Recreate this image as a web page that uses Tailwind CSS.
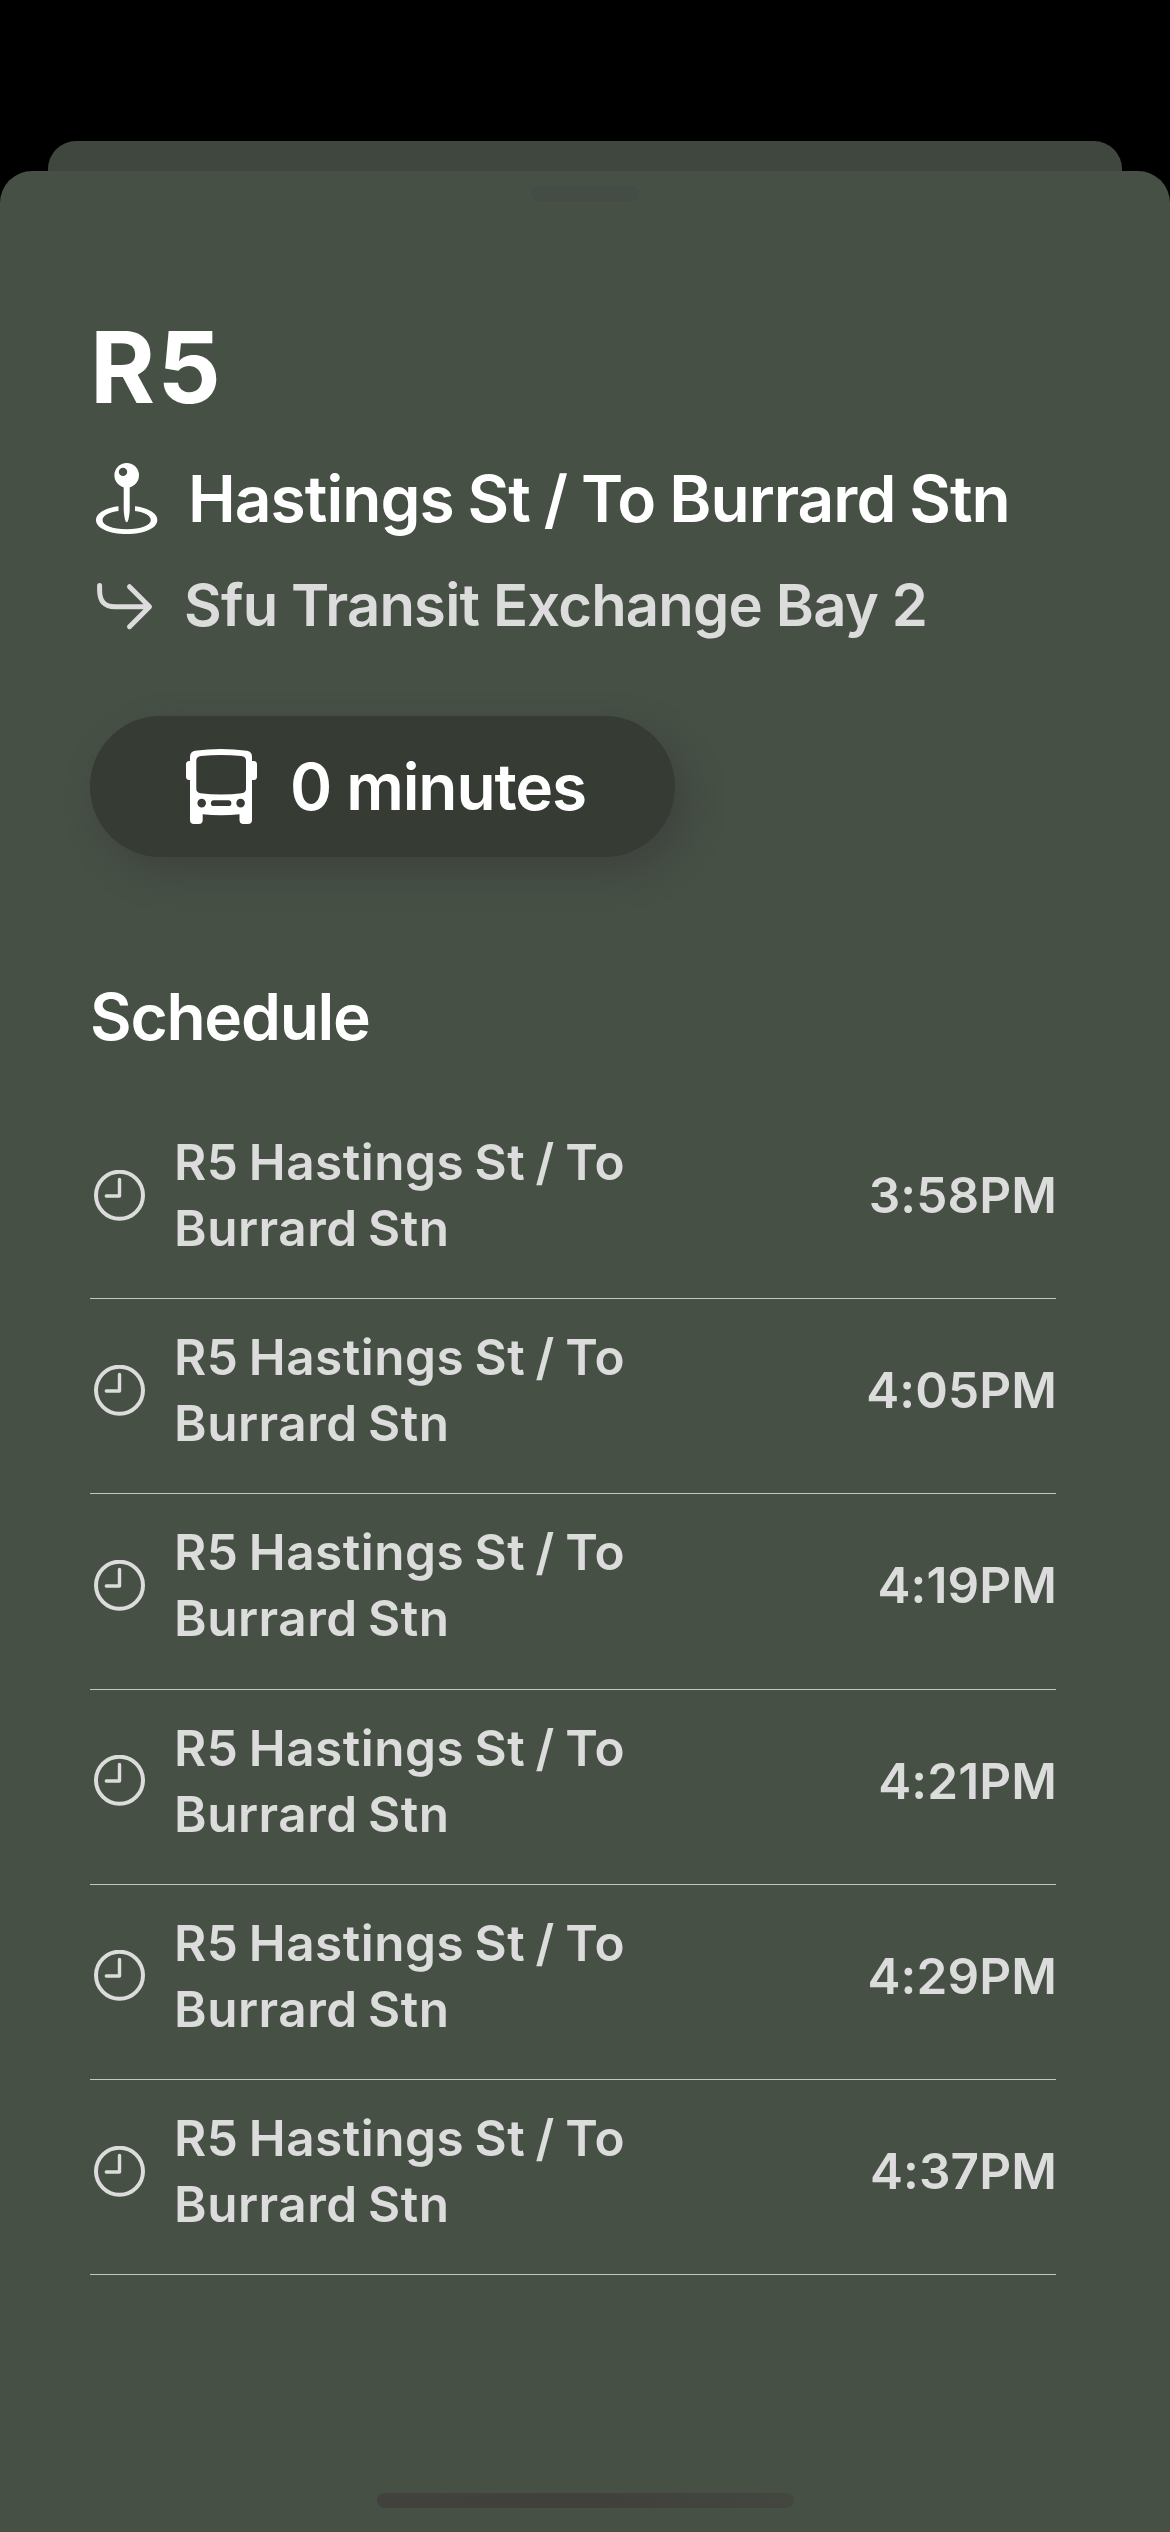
<!DOCTYPE html>
<html lang="en">
<head>
<meta charset="utf-8">
<title>R5 Schedule</title>
<script src="https://cdn.jsdelivr.net/npm/@tailwindcss/browser@4"></script>
</head>
<body class="bg-black">
<div class="flex h-[2532px] w-[1170px] flex-col overflow-hidden bg-black pt-[141px] font-['Inter',sans-serif]">
  <!-- Sheet behind -->
  <div class="mx-12 h-[30px] shrink-0 rounded-t-[28px] bg-[#40473e]"></div>

  <!-- Front sheet -->
  <main class="flex grow flex-col rounded-t-[32px] bg-[#465045] pt-[15px]">
    <div class="h-[15px] w-[108px] shrink-0 self-center rounded-full bg-[#454b45]"></div>

    <div class="flex flex-col px-[90px] pt-[106px] pr-[114px] text-white">
      <h1 class="text-[99px] leading-[120px] font-bold tracking-[2.500px]">R5</h1>

      <div class="mt-8 flex h-20 items-center">
        <svg class="h-20 w-[98px] shrink-0" viewBox="90 459 98 80" fill="#fff">
          <path fill-rule="evenodd" d="M126.7 463a12.3 12.3 0 1 1 0 24.6a12.3 12.3 0 1 1 0-24.6zM123 467.7a4.2 4.2 0 1 0 0 8.4a4.2 4.2 0 1 0 0-8.4z"/>
          <path d="M123.7 486h6v22c0 6-1 11-2 13.400q-1 1.600-2 0c-1-2.400-2-7.400-2-13.400z"/>
          <path d="M118.500 506.300C105.500 507.800 96 513 96 520C96 528.200 109 534 126.700 534S157.300 528.200 157.300 520C157.300 513 148 507.800 135 506.300V511C144.500 512.200 150.800 515.600 150.800 520C150.800 525.200 141 529.200 126.700 529.200S102.500 525.200 102.500 520C102.500 515.600 109 512.200 118.500 511z"/>
        </svg>
        <p class="text-[64px] leading-20 font-semibold tracking-[-0.950px] whitespace-nowrap [word-spacing:-1.3px]">Hastings St / To Burrard Stn</p>
      </div>

      <div class="mt-[30px] flex h-[72px] items-center text-[#dcdcdc]">
        <svg class="h-[72px] w-[94px] shrink-0" viewBox="90 569 94 72" fill="none" stroke="currentColor" stroke-width="5" stroke-linecap="round" stroke-linejoin="round">
          <path d="M99.600 585.500V590C99.600 601.500 104.500 606.700 115 606.700H149M129.500 586.700L149.500 606.700L129.500 626.700"/>
        </svg>
        <p class="text-[58px] leading-[72px] font-semibold tracking-[-0.820px] whitespace-nowrap">Sfu Transit Exchange Bay 2</p>
      </div>

      <div class="mt-[75px] flex h-[141px] w-[585px] items-center rounded-full bg-[#363b34] shadow-[12px_15px_36px_rgba(50,45,50,0.36)]">
        <svg class="h-[141px] w-[200px] shrink-0" viewBox="90 716 200 141" fill="#fff">
          <path fill-rule="evenodd" d="M190 761V757Q190 751.500 195 750.700Q208 749 221 749T247 750.700Q252 751.500 252 757V761H254Q257 761.300 257 764.500V776.500Q257 779.700 254 780H252V820Q252 824 248 824H243.500Q239.500 824 239.500 820V814.300Q230 815.300 221 815.300T202.700 814.300V820Q202.700 824 198.700 824H194Q190 824 190 820V780H189Q186 779.700 186 776.500V764.500Q186 761.300 189 761zM201 756Q196.300 756.600 196.300 760.500V789Q196.300 792.500 200.500 793.200Q210 794.500 221 794.500T241.700 793.200Q246 792.500 246 789V760.500Q246 756.600 241.300 756Q231 755 221 755T201 756zM201.700 798.800a4.300 4.300 0 1 0 0 8.600a4.300 4.300 0 1 0 0-8.600zM240.600 798.800a4.300 4.300 0 1 0 0 8.600a4.300 4.300 0 1 0 0-8.600zM213.800 800.300a2.900 2.900 0 0 0 0 5.800H228.500a2.900 2.900 0 0 0 0-5.800z"/>
        </svg>
        <span class="text-[64px] leading-20 font-semibold tracking-[-1.100px] whitespace-nowrap">0 minutes</span>
      </div>

      <h2 class="mt-[120px] text-[64px] leading-20 font-semibold tracking-[-1.250px]">Schedule</h2>

      <ul id="schedule" class="mt-[47px] flex flex-col text-[49.500px] leading-[66px] font-semibold text-[#dcdcdc]"></ul>
    </div>

    <div class="mt-auto mb-6 h-[15px] w-[417px] shrink-0 self-center rounded-full bg-linear-to-r from-[#41423e] via-[#40403d] to-[#434740]"></div>
  </main>
</div>

<template id="row">
  <li class="flex h-[195.200px] items-center border-b border-[#c3c4c6] pt-[25px] pb-[37px]">
    <svg class="mr-[29px] ml-1 h-[51px] w-[51px] shrink-0" viewBox="0 0 51 51" fill="none" stroke="currentColor">
      <circle cx="25.500" cy="25.200" r="23.500" stroke-width="4"/>
      <path d="M25.500 9.500V26H12.300" stroke-width="3.400" stroke-linecap="round" stroke-linejoin="round"/>
    </svg>
    <p class="w-[500px] tracking-[0.500px] [word-spacing:-2.600px]">R5 Hastings St / To Burrard Stn</p>
    <time class="-mr-px ml-auto tracking-[0.100px]"></time>
  </li>
</template>
<script>
  const list = document.getElementById('schedule');
  const row = document.getElementById('row');
  for (const t of ['3:58PM', '4:05PM', '4:19PM', '4:21PM', '4:29PM', '4:37PM']) {
    const item = row.content.cloneNode(true);
    item.querySelector('time').textContent = t;
    list.appendChild(item);
  }
</script>
</body>
</html>
